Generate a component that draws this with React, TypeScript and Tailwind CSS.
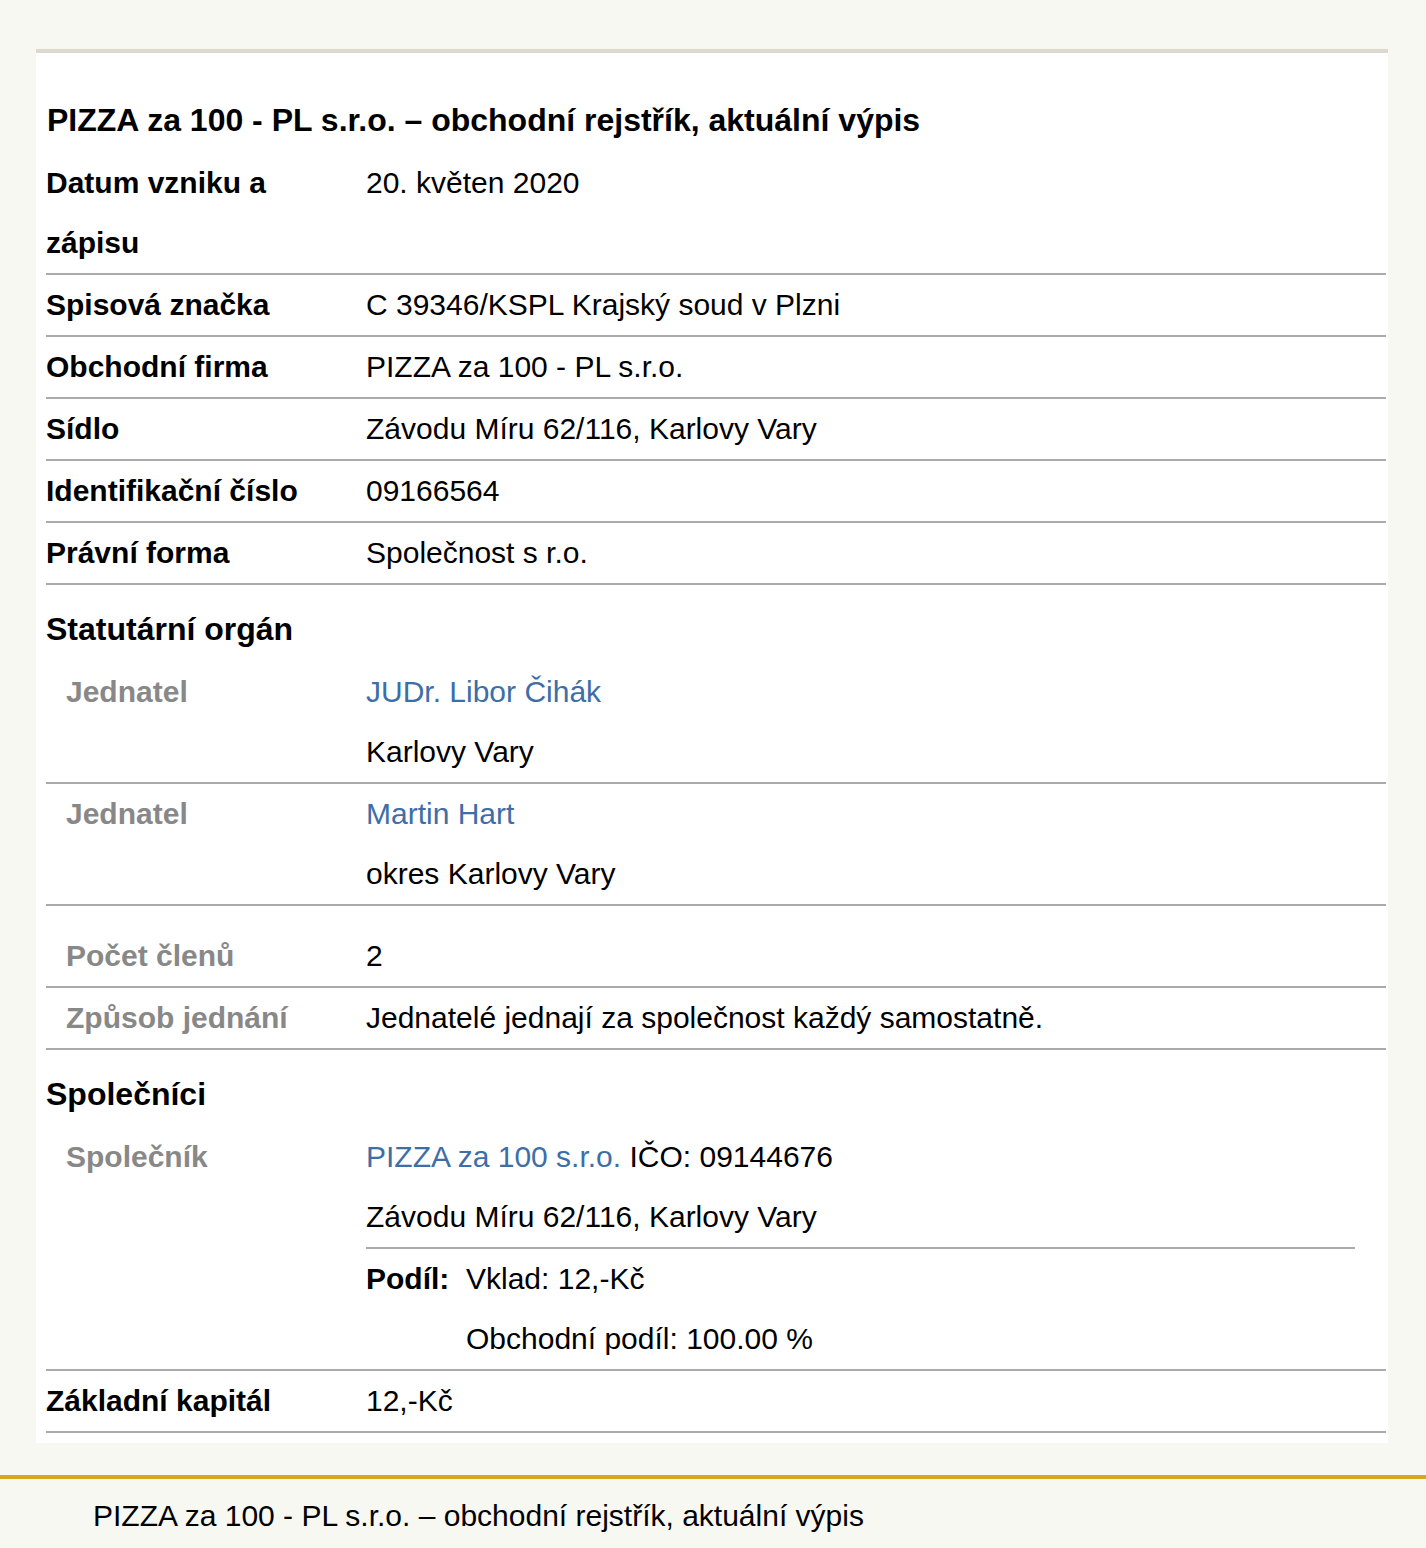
import type { ReactNode } from 'react';

function Row({ label, children, sub = false, className = '' }: { label: ReactNode; children?: ReactNode; sub?: boolean; className?: string }) {
  return (
    <div className={`grid grid-cols-[320px_1fr] border-b-2 border-[#aaaaaa] ${className}`}>
      <div className={sub ? 'pl-[20px] pr-4 font-bold text-[#888888]' : 'pr-4 font-bold'}>{label}</div>
      <div>{children}</div>
    </div>
  );
}

function Section({ title }: { title: string }) {
  return <h2 className="pt-[14px] pb-[3px] text-[32px] font-bold">{title}</h2>;
}

export default function App() {
  const title = 'PIZZA za 100 - PL s.r.o. – obchodní rejstřík, aktuální výpis';

  return (
    <div className="min-h-screen bg-[#f8f8f3] pt-[49px] font-['Liberation_Sans',Arial,sans-serif] text-[30px] leading-[60px] text-black">
      <main className="ml-[36px] w-[1352px] border-t-4 border-[#dadbcd] bg-white pb-[10px] pl-[10px] pr-[2px]">
        <h1 className="mb-[3px] pt-[37px] pl-px text-[32px] font-bold">{title}</h1>

        <Row label={<span className="block w-[240px]">Datum vzniku a zápisu</span>}>20. květen 2020</Row>
        <Row label="Spisová značka">C 39346/KSPL Krajský soud v Plzni</Row>
        <Row label="Obchodní firma">PIZZA za 100 - PL s.r.o.</Row>
        <Row label="Sídlo">Závodu Míru 62/116, Karlovy Vary</Row>
        <Row label="Identifikační číslo">09166564</Row>
        <Row label="Právní forma">Společnost s r.o.</Row>

        <Section title="Statutární orgán" />
        <Row label="Jednatel" sub>
          <a href="#" className="block text-[#3d6ea8]">JUDr. Libor Čihák</a>
          <div>Karlovy Vary</div>
        </Row>
        <Row label="Jednatel" sub>
          <a href="#" className="block text-[#3d6ea8]">Martin Hart</a>
          <div>okres Karlovy Vary</div>
        </Row>
        <Row label="Počet členů" sub className="pt-[20px]">2</Row>
        <Row label="Způsob jednání" sub>Jednatelé jednají za společnost každý samostatně.</Row>

        <Section title="Společníci" />
        <Row label="Společník" sub>
          <div>
            <a href="#" className="text-[#3d6ea8]">PIZZA za 100 s.r.o.</a> IČO: 09144676
          </div>
          <div className="mr-[31px] border-b-2 border-[#aaaaaa]">Závodu Míru 62/116, Karlovy Vary</div>
          <div className="grid grid-cols-[100px_1fr]">
            <span className="font-bold">Podíl:</span>
            <div>
              <div>Vklad: 12,-Kč</div>
              <div>Obchodní podíl: 100.00 %</div>
            </div>
          </div>
        </Row>
        <Row label="Základní kapitál">12,-Kč</Row>
      </main>

      <footer className="mt-[32px] border-t-4 border-[#daa520] pl-[93px] pt-[7px]">{title}</footer>
    </div>
  );
}
